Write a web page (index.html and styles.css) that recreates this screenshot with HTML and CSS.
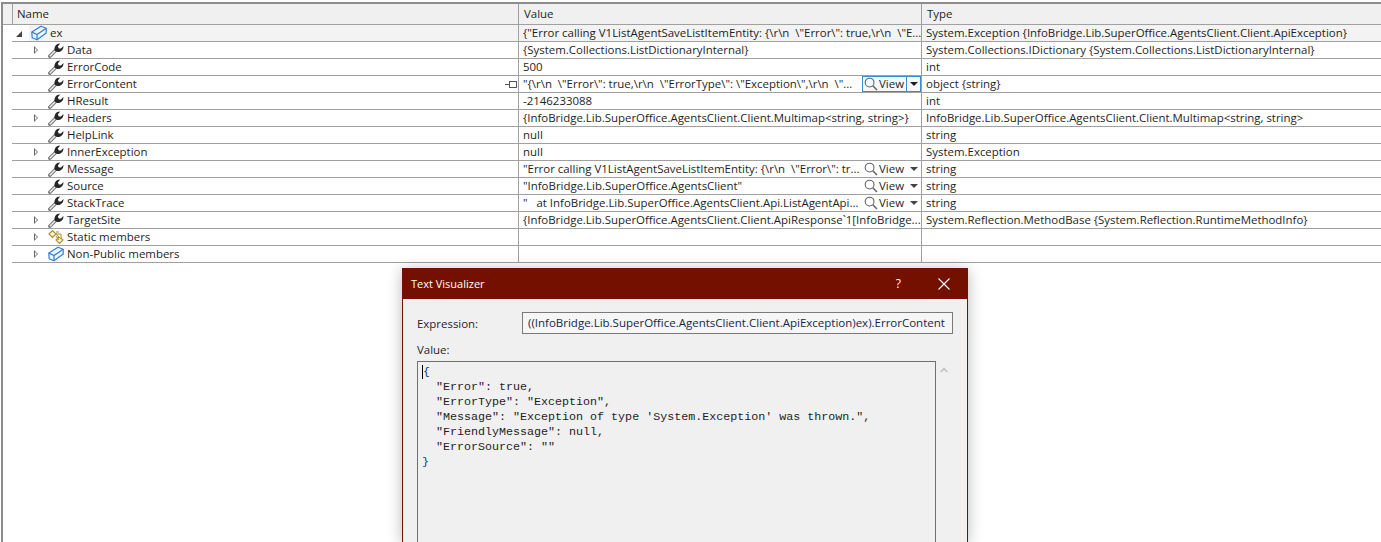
FILE: index.html
```html
<!DOCTYPE html>
<html lang="en">
<head>
<meta charset="utf-8">
<title>Locals</title>
<link rel="stylesheet" href="styles.css">
</head>
<body>
<svg class="defs" width="0" height="0" aria-hidden="true">
  <symbol id="wrench" viewBox="0 0 16 16">
    <path d="M1.8 14.2 L8 8" stroke="#7d7d7d" stroke-width="3.6" stroke-linecap="round" fill="none"/>
    <path d="M1.8 14.2 L8 8" stroke="#ececec" stroke-width="1.4" fill="none"/>
    <path d="M6.8 9 C5.6 5.2 8 1.6 12.2 1.6 L9.8 4.4 L10.8 6.4 L13 6.6 L15.4 4 C15.8 8.2 12 10.8 8.8 9.8 Z" fill="#262626"/>
  </symbol>
  <symbol id="cube" viewBox="0 0 16 16">
    <path d="M0.8 7 L10 1.2 L15.2 3.2 L15.2 8 L6 14.8 L1.2 12.8 Z" fill="#eef5fc" stroke="#2f7fd0" stroke-width="1.2" stroke-linejoin="round"/>
    <path d="M0.8 7 L6 9.6 L15.2 3.2 M6 9.6 L6 14.8" fill="none" stroke="#2f7fd0" stroke-width="1.2"/>
  </symbol>
  <symbol id="static" viewBox="0 0 16 16">
    <path d="M1 5 L4.5 1.5 L8 5 L4.5 8.5 Z M8 3 L11 3 M8 7 L11 11 M11.5 7.5 L15 11 L11.5 14.5 L8 11 Z" fill="#fdf6df" stroke="#b08a2e" stroke-width="1.1"/>
    <path d="M8 5 L13 10 L13 5 Z" fill="#fff" stroke="#b08a2e" stroke-width="1"/>
  </symbol>
  <symbol id="lens" viewBox="0 0 14 14">
    <circle cx="5.6" cy="5.6" r="4.4" fill="none" stroke="#666" stroke-width="1.1"/>
    <path d="M8.8 8.8 L13 13" stroke="#666" stroke-width="1.6"/>
  </symbol>
</svg>

<main class="watch">
  <div class="row head">
    <div class="cell name">Name</div><div class="cell value">Value</div><div class="cell type">Type</div>
  </div>

  <div class="row current">
    <div class="cell name lvl0"><span class="tw open"></span><svg class="ico"><use href="#cube"/></svg><span class="lbl">ex</span></div>
    <div class="cell value">{"Error calling V1ListAgentSaveListItemEntity: {\r\n  \"Error\": true,\r\n  \"E...</div>
    <div class="cell type">System.Exception {InfoBridge.Lib.SuperOffice.AgentsClient.Client.ApiException}</div>
  </div>
  <div class="row">
    <div class="cell name lvl1"><span class="tw"></span><svg class="ico"><use href="#wrench"/></svg><span class="lbl">Data</span></div>
    <div class="cell value">{System.Collections.ListDictionaryInternal}</div>
    <div class="cell type">System.Collections.IDictionary {System.Collections.ListDictionaryInternal}</div>
  </div>
  <div class="row">
    <div class="cell name lvl1"><span class="tw none"></span><svg class="ico"><use href="#wrench"/></svg><span class="lbl">ErrorCode</span></div>
    <div class="cell value">500</div>
    <div class="cell type">int</div>
  </div>
  <div class="row">
    <div class="cell name lvl1"><span class="tw none"></span><svg class="ico"><use href="#wrench"/></svg><span class="lbl">ErrorContent</span><svg class="pin" viewBox="0 0 12 7"><path d="M0 3.5 H4" stroke="#555" fill="none"/><rect x="4.5" y="0.5" width="7" height="6" fill="#fff" stroke="#555"/></svg></div>
    <div class="cell value"><span class="txt">"{\r\n  \"Error\": true,\r\n  \"ErrorType\": \"Exception\",\r\n  \"...</span><span class="view active"><svg class="lens"><use href="#lens"/></svg><span class="vlbl">View</span><span class="drop"></span></span></div>
    <div class="cell type">object {string}</div>
  </div>
  <div class="row">
    <div class="cell name lvl1"><span class="tw none"></span><svg class="ico"><use href="#wrench"/></svg><span class="lbl">HResult</span></div>
    <div class="cell value">-2146233088</div>
    <div class="cell type">int</div>
  </div>
  <div class="row">
    <div class="cell name lvl1"><span class="tw"></span><svg class="ico"><use href="#wrench"/></svg><span class="lbl">Headers</span></div>
    <div class="cell value">{InfoBridge.Lib.SuperOffice.AgentsClient.Client.Multimap&lt;string, string&gt;}</div>
    <div class="cell type">InfoBridge.Lib.SuperOffice.AgentsClient.Client.Multimap&lt;string, string&gt;</div>
  </div>
  <div class="row">
    <div class="cell name lvl1"><span class="tw none"></span><svg class="ico"><use href="#wrench"/></svg><span class="lbl">HelpLink</span></div>
    <div class="cell value">null</div>
    <div class="cell type">string</div>
  </div>
  <div class="row">
    <div class="cell name lvl1"><span class="tw"></span><svg class="ico"><use href="#wrench"/></svg><span class="lbl">InnerException</span></div>
    <div class="cell value">null</div>
    <div class="cell type">System.Exception</div>
  </div>
  <div class="row">
    <div class="cell name lvl1"><span class="tw none"></span><svg class="ico"><use href="#wrench"/></svg><span class="lbl">Message</span></div>
    <div class="cell value"><span class="txt">"Error calling V1ListAgentSaveListItemEntity: {\r\n  \"Error\": tr...</span><span class="view"><svg class="lens"><use href="#lens"/></svg><span class="vlbl">View</span><span class="drop"></span></span></div>
    <div class="cell type">string</div>
  </div>
  <div class="row">
    <div class="cell name lvl1"><span class="tw none"></span><svg class="ico"><use href="#wrench"/></svg><span class="lbl">Source</span></div>
    <div class="cell value"><span class="txt">"InfoBridge.Lib.SuperOffice.AgentsClient"</span><span class="view"><svg class="lens"><use href="#lens"/></svg><span class="vlbl">View</span><span class="drop"></span></span></div>
    <div class="cell type">string</div>
  </div>
  <div class="row">
    <div class="cell name lvl1"><span class="tw none"></span><svg class="ico"><use href="#wrench"/></svg><span class="lbl">StackTrace</span></div>
    <div class="cell value"><span class="txt">"   at InfoBridge.Lib.SuperOffice.AgentsClient.Api.ListAgentApi...</span><span class="view"><svg class="lens"><use href="#lens"/></svg><span class="vlbl">View</span><span class="drop"></span></span></div>
    <div class="cell type">string</div>
  </div>
  <div class="row">
    <div class="cell name lvl1"><span class="tw"></span><svg class="ico"><use href="#wrench"/></svg><span class="lbl">TargetSite</span></div>
    <div class="cell value">{InfoBridge.Lib.SuperOffice.AgentsClient.Client.ApiResponse`1[InfoBridge...</div>
    <div class="cell type">System.Reflection.MethodBase {System.Reflection.RuntimeMethodInfo}</div>
  </div>
  <div class="row">
    <div class="cell name lvl1"><span class="tw"></span><svg class="ico"><use href="#static"/></svg><span class="lbl">Static members</span></div>
    <div class="cell value"></div>
    <div class="cell type"></div>
  </div>
  <div class="row">
    <div class="cell name lvl1"><span class="tw"></span><svg class="ico"><use href="#cube"/></svg><span class="lbl">Non-Public members</span></div>
    <div class="cell value"></div>
    <div class="cell type"></div>
  </div>
</main>

<section class="dialog">
  <header class="titlebar">
    <span class="title">Text Visualizer</span>
    <span class="help">?</span>
    <svg class="close" viewBox="0 0 12 12"><path d="M0.5 0.5 L11.5 11.5 M11.5 0.5 L0.5 11.5" stroke="#fff" stroke-width="1.1" fill="none"/></svg>
  </header>
  <div class="content">
    <div class="expr">
      <span class="exprlabel">Expression:</span>
      <div class="exprbox">((InfoBridge.Lib.SuperOffice.AgentsClient.Client.ApiException)ex).ErrorContent</div>
    </div>
    <div class="valuelabel">Value:</div>
    <div class="valuewrap">
      <pre class="code"><span class="brace caret">{</span>
  "Error": true,
  "ErrorType": "Exception",
  "Message": "Exception of type 'System.Exception' was thrown.",
  "FriendlyMessage": null,
  "ErrorSource": ""
<span class="brace">}</span></pre>
      <svg class="scrollup" viewBox="0 0 8 6"><path d="M0.8 5 L4 1.6 L7.2 5" stroke="#c4c4c4" stroke-width="1.8" fill="none"/></svg>
    </div>
  </div>
</section>
</body>
</html>
```
FILE: styles.css
```css
* { box-sizing: border-box; }
html, body { margin: 0; height: 100%; overflow: hidden; background: #fff; }
body {
  position: relative;
  font-family: "Open Sans", "Noto Sans", sans-serif;
  font-size: 11.45px;
  color: #1e1e1e;
}
.defs { position: absolute; }

.watch {
  margin-top: 2px;
  margin-left: 1px;
  height: 540px;
  border-top: 2px solid #8c8c8c;
  border-left: 2px solid #8c8c8c;
}

.row {
  display: grid;
  grid-template-columns: 507px 403px 1fr;
  height: 17px;
  margin-left: 9px;
  border-bottom: 1px solid #a0a0a0;
}
.head {
  height: 21px;
  margin-left: 0;
  grid-template-columns: 516px 403px 1fr;
  background: #f0f0f0;
}
.head .cell { line-height: 19px; padding-left: 5px; align-items: flex-start; }
.head .name { padding-left: 14px; background: linear-gradient(to right, #f0f0f0 9px, #a0a0a0 9px, #a0a0a0 10px, #f0f0f0 10px); }

.cell {
  display: flex;
  align-items: center;
  min-width: 0;
  white-space: pre;
  overflow: hidden;
  line-height: 16px;
  padding-left: 4px;
  border-right: 1px solid #a0a0a0;
}
.row .type { border-right: 0; }
.row:not(.head) .name { position: relative; }
.current .value, .current .type { background: #f3f3f3; }
.current .name { background: linear-gradient(to right, #fff 17px, #f3f3f3 17px); }

.row .lvl0 { padding-left: 4px; }
.row .lvl1 { padding-left: 21px; }

.tw { flex: none; width: 7px; height: 8px; margin-right: 8px; position: relative; }
.tw::before {
  content: "";
  position: absolute;
  left: 1px; top: 0;
  border-left: 4px solid #666;
  border-top: 4px solid transparent;
  border-bottom: 4px solid transparent;
}
.tw::after {
  content: "";
  position: absolute;
  left: 2px; top: 2px;
  border-left: 2px solid #fff;
  border-top: 2px solid transparent;
  border-bottom: 2px solid transparent;
}
.tw.none::before, .tw.none::after { display: none; }
.tw.open::before {
  left: 0; top: 2px;
  border: 0;
  border-right: 6px solid #444;
  border-top: 6px solid transparent;
}
.tw.open::after { display: none; }

.ico { flex: none; width: 16px; height: 16px; margin-right: 3px; }
.lbl { flex: none; }

.pin {
  position: absolute;
  right: 1px;
  top: 5px;
  width: 12px;
  height: 7px;
}

.txt { flex: 1; min-width: 0; overflow: hidden; }
.view {
  flex: none;
  display: flex;
  align-items: center;
  width: 59px;
  height: 16px;
  padding-left: 1px;
  border: 1px solid transparent;
}
.view.active { background: #f3f8fd; border-color: #3c8dd0; }
.lens { flex: none; width: 14px; height: 14px; }
.vlbl { margin-left: 1px; width: 26px; flex: none; }
.drop {
  flex: none;
  width: 0; height: 0;
  margin-left: 5px;
  border-left: 4px solid transparent;
  border-right: 4px solid transparent;
  border-top: 4px solid #444;
}
.view.active .vlbl { border-right: 1px solid #3c8dd0; width: 28px; line-height: 14px; }
.view.active .drop { margin-left: 3px; border-top-color: #1e1e1e; }

.dialog {
  position: absolute;
  left: 402px;
  top: 268px;
  width: 566px;
  height: 274px;
  background: #f0f0f0;
  border-left: 1px solid #741000;
  border-right: 1px solid #741000;
  box-shadow: 0 2px 14px rgba(0, 0, 0, 0.28);
}
.titlebar {
  display: flex;
  align-items: center;
  height: 31px;
  margin: 0 -1px;
  padding: 0 18px 0 9px;
  background: #741000;
  color: #fff;
}
.title { flex: 1; font-size: 11px; }
.help { font-size: 12px; margin-right: 37px; }
.close { width: 12px; height: 12px; }

.content { padding: 13px 14px 0 14px; }
.expr { display: flex; align-items: center; height: 22px; }
.exprlabel { width: 105px; flex: none; }
.exprbox {
  flex: none;
  width: 431px;
  height: 22px;
  border: 1px solid #7a7a7a;
  background: #f6f6f6;
  padding-left: 5px;
  line-height: 20px;
  font-size: 11.5px;
  white-space: pre;
  overflow: hidden;
  color: #12284b;
}
.valuelabel { margin-top: 8px; height: 19px; line-height: 16px; }
.valuewrap { display: flex; }
.code {
  flex: none;
  margin: 0;
  width: 519px;
  height: 181px;
  border: 1px solid #707070;
  border-bottom: 0;
  padding: 3px 0 0 4px;
  font-family: "Liberation Mono", monospace;
  font-size: 11.68px;
  line-height: 15px;
  color: #1e1e1e;
  overflow: hidden;
}
.brace { color: #0b3f7a; }
.caret { border-left: 1px solid #000; }
.scrollup { flex: none; width: 8px; height: 6px; margin: 6px 0 0 4px; }
```
